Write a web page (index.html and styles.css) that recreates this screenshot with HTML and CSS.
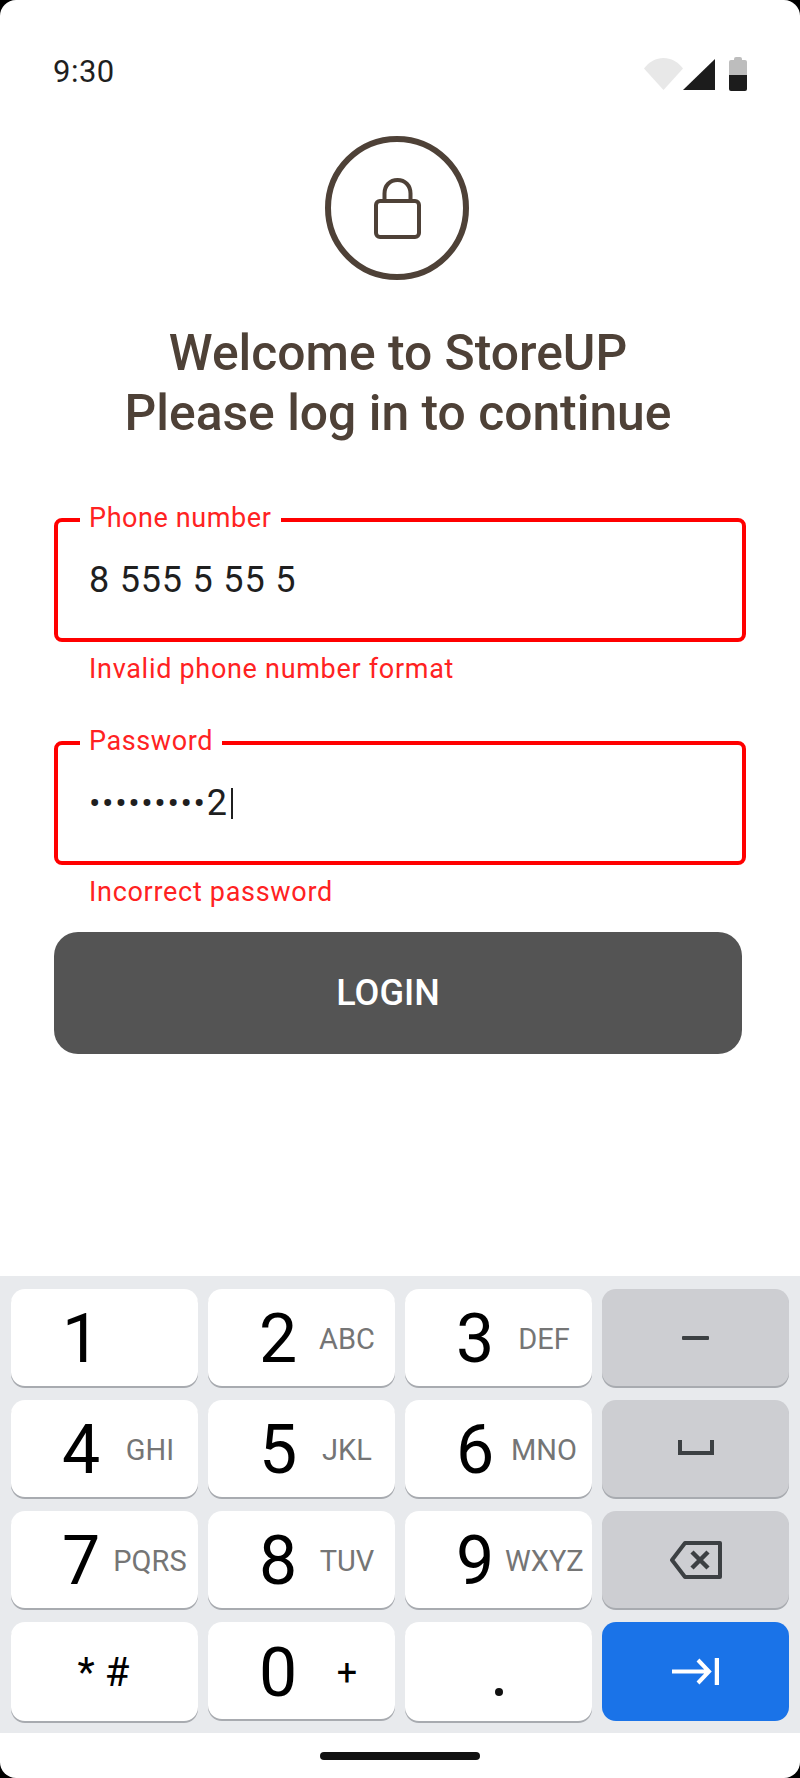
FILE: index.html
```html
<!DOCTYPE html>
<html lang="en">
<head>
<meta charset="utf-8">
<title>StoreUP login</title>
<link rel="stylesheet" href="styles.css">
</head>
<body>
<div class="phone">
  <header class="status">
    <span class="time">9:30</span>
    <div class="status-icons">
      <svg class="wifi" width="39" height="32" viewBox="0 0 39 32"><path d="M0 10.5C5 4 12 0 19.5 0S34 4 39 10.5L19.5 32Z" fill="#e8e8e8"/></svg>
      <svg class="signal" width="32" height="31" viewBox="0 0 32 31"><path d="M32 0V31H0Z" fill="#1c1c1c"/></svg>
      <svg class="battery" width="18" height="34" viewBox="0 0 18 34"><path d="M5 2Q5 0 7 0H11Q13 0 13 2V3H16Q18 3 18 5V18H0V5Q0 3 2 3H5Z" fill="#bdbdbd"/><path d="M0 18H18V32Q18 34 16 34H2Q0 34 0 32Z" fill="#1c1c1c"/></svg>
    </div>
  </header>

  <main class="content">
    <div class="avatar">
      <svg class="lock" width="47" height="61" viewBox="0 0 47 61"><rect x="2" y="23" width="43" height="36" rx="4" fill="none" stroke="#4e4137" stroke-width="4"/><path d="M10.500 23V15.500C10.500 7.500 16 2 23.500 2S36.500 7.500 36.500 15.500V23" fill="none" stroke="#4e4137" stroke-width="4"/></svg>
    </div>
    <h1 class="title">Welcome to StoreUP<br>Please log in to continue</h1>

    <form class="form">
      <div class="field field-phone">
        <fieldset class="box">
          <legend class="label">Phone number</legend>
          <div class="value">8 555 5 55 5</div>
        </fieldset>
        <p class="error">Invalid phone number format</p>
      </div>
      <div class="field field-password">
        <fieldset class="box">
          <legend class="label">Password</legend>
          <div class="value"><span class="dots">•••••••••</span>2<span class="caret"></span></div>
        </fieldset>
        <p class="error">Incorrect password</p>
      </div>
      <div class="login">LOGIN</div>
    </form>
  </main>

  <section class="keyboard">
    <div class="key"><span class="digit">1</span></div>
    <div class="key"><span class="digit">2</span><span class="letters">ABC</span></div>
    <div class="key"><span class="digit">3</span><span class="letters">DEF</span></div>
    <div class="key key-fn">
      <svg width="27" height="4" viewBox="0 0 27 4"><rect width="27" height="4" rx="1" fill="#3c4043"/></svg>
    </div>
    <div class="key"><span class="digit">4</span><span class="letters">GHI</span></div>
    <div class="key"><span class="digit">5</span><span class="letters">JKL</span></div>
    <div class="key"><span class="digit">6</span><span class="letters">MNO</span></div>
    <div class="key key-fn">
      <svg class="space-icon" width="36" height="15" viewBox="0 0 36 15"><path d="M2 0V13H34V0" fill="none" stroke="#3c4043" stroke-width="4"/></svg>
    </div>
    <div class="key"><span class="digit">7</span><span class="letters">PQRS</span></div>
    <div class="key"><span class="digit">8</span><span class="letters">TUV</span></div>
    <div class="key"><span class="digit">9</span><span class="letters">WXYZ</span></div>
    <div class="key key-fn">
      <svg width="52" height="38" viewBox="0 0 52 38"><path d="M50 2H15L2 19L15 36H50Z" fill="none" stroke="#3c4043" stroke-width="4" stroke-linejoin="round"/><path d="M22 11L38 27M38 11L22 27" fill="none" stroke="#3c4043" stroke-width="4.500"/></svg>
    </div>
    <div class="key key-symbols"><span>* #</span></div>
    <div class="key key-zero"><span class="digit">0</span><span class="plus">+</span></div>
    <div class="key key-dot"><span class="dot"></span></div>
    <div class="key key-go">
      <svg width="47" height="27" viewBox="0 0 47 27"><path d="M0 13.500H37M26 2L37 13.500L26 25" fill="none" stroke="#fff" stroke-width="4"/><path d="M45 0V27" fill="none" stroke="#fff" stroke-width="4.500"/></svg>
    </div>
  </section>

  <footer class="nav"><span class="home"></span></footer>
</div>
</body>
</html>
```

FILE: styles.css
```css
* { box-sizing: border-box; }
html, body { margin: 0; padding: 0; background: #000; }
body { width: 800px; height: 1778px; overflow: hidden; font-family: Roboto, "Liberation Sans", sans-serif; }

.phone {
  width: 800px; height: 1778px; background: #fff; border-radius: 16px; overflow: hidden;
  display: flex; flex-direction: column;
}

.status {
  height: 136px; padding: 54px 53px 0 53px;
  display: flex; justify-content: space-between; align-items: flex-start;
}
.time { font-size: 31px; line-height: 36px; color: #1f1f1f; letter-spacing: .5px; }
.status-icons { display: flex; align-items: flex-end; height: 34px; margin-top: 3px; }
.wifi { margin-bottom: 1px; }
.signal { margin-right: 14px; margin-bottom: 1px; }

.content { flex: 1; display: flex; flex-direction: column; align-items: center; }
.avatar {
  width: 144px; height: 144px; border: 6px solid #4e4137; border-radius: 50%;
  display: flex; align-items: center; justify-content: center; margin-right: 6px;
}
.lock { margin-top: 1px; }
.title {
  margin: 43px 4px 0 0; font-size: 49.800px; line-height: 60px; font-weight: 500;
  color: #4e4137; text-align: center;
}

.form { width: 800px; padding: 0 54px; margin-top: 62px; }
.box {
  margin: 0; width: 692px; height: 137px; padding: 0 32px 0 31px;
  border: 4px solid #f00; border-radius: 8px; min-width: 0;
}
.label {
  padding: 0 9px 4px; margin-left: -9px; font-size: 27px; line-height: 26px; color: #f22;
  letter-spacing: .6px;
}
.value {
  font-size: 36px; line-height: 44px; color: #1f1f1f; margin-top: 23px; letter-spacing: .8px;
  display: flex; align-items: center;
}
.dots { letter-spacing: 1.600px; font-size: 34px; }
.caret { width: 2px; height: 31px; background: #1f1f1f; margin-left: 3px; }
.error { margin: 10px 0 0 35px; font-size: 27px; line-height: 34px; color: #f22; letter-spacing: .7px; }
.field-password { margin-top: 42px; }

.login {
  margin-top: 23px; width: 688px; height: 122px; border-radius: 24px; background: #545454; color: #fff;
  font-size: 36px; font-weight: 500; display: flex; align-items: center; justify-content: center;
  padding-right: 20px;
}

.keyboard {
  height: 457px; background: #e8eaed; padding: 13px 11px 0;
  display: grid; grid-template-columns: repeat(4, 187px); grid-auto-rows: 97px;
  column-gap: 10px; row-gap: 14px;
}
.key {
  background: #fff; border-radius: 14px; box-shadow: 0 2px 0 #a8abb0;
  display: flex; align-items: center; padding: 3px 0 0 40px; color: #000;
}
.digit { width: 60px; text-align: center; font-size: 68px; line-height: 94px; }
.letters { width: 78px; text-align: center; font-size: 29px; color: #757575; white-space: nowrap; }
.plus { width: 78px; text-align: center; font-size: 36px; }
.key-fn { background: #cdced2; justify-content: center; padding: 0; }
.space-icon { margin-top: -3px; }
.key-symbols { justify-content: center; padding: 2px 2px 0 0; font-size: 40px; height: 99px; }
.key-zero { padding-top: 5px; }
.key-dot { justify-content: center; padding: 41px 0 0; height: 99px; }
.dot { width: 8px; height: 8px; border-radius: 50%; background: #111; }
.key-go { background: #1a73e8; justify-content: center; padding: 0; box-shadow: none; height: 99px; }

.nav { height: 45px; display: flex; justify-content: center; padding-top: 19px; }
.home { width: 160px; height: 8px; border-radius: 4px; background: #111; }
```
